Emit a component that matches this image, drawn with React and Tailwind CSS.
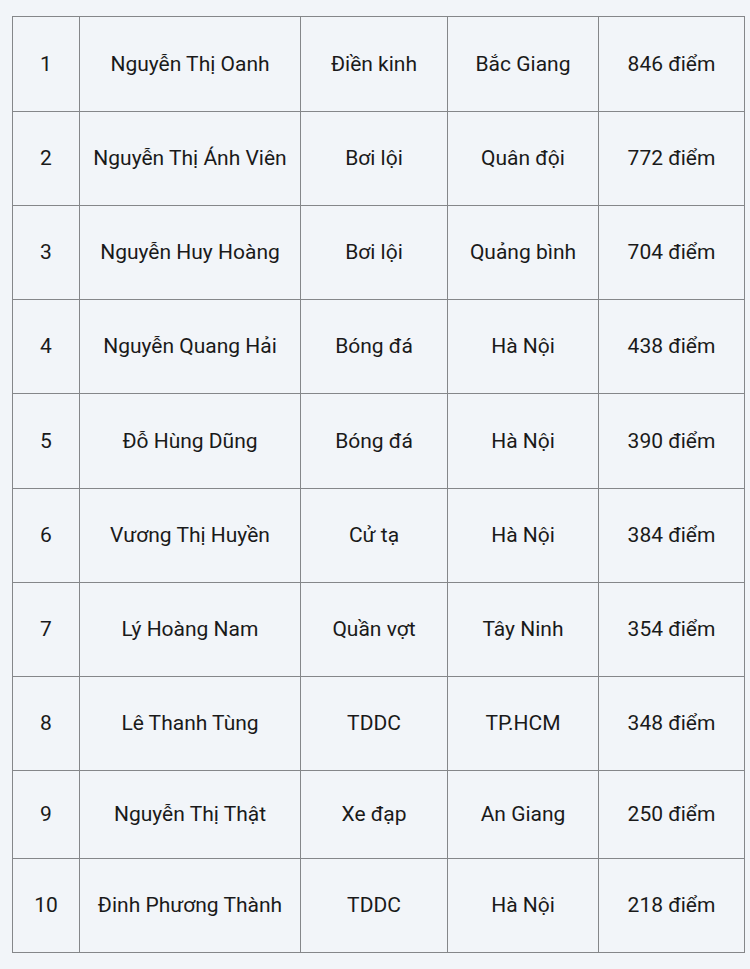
import React from 'react';

const rows = [
  ['1', 'Nguyễn Thị Oanh', 'Điền kinh', 'Bắc Giang', '846 điểm', 95],
  ['2', 'Nguyễn Thị Ánh Viên', 'Bơi lội', 'Quân đội', '772 điểm', 94],
  ['3', 'Nguyễn Huy Hoàng', 'Bơi lội', 'Quảng bình', '704 điểm', 94],
  ['4', 'Nguyễn Quang Hải', 'Bóng đá', 'Hà Nội', '438 điểm', 94],
  ['5', 'Đỗ Hùng Dũng', 'Bóng đá', 'Hà Nội', '390 điểm', 95],
  ['6', 'Vương Thị Huyền', 'Cử tạ', 'Hà Nội', '384 điểm', 94],
  ['7', 'Lý Hoàng Nam', 'Quần vợt', 'Tây Ninh', '354 điểm', 94],
  ['8', 'Lê Thanh Tùng', 'TDDC', 'TP.HCM', '348 điểm', 94],
  ['9', 'Nguyễn Thị Thật', 'Xe đạp', 'An Giang', '250 điểm', 88],
  ['10', 'Đinh Phương Thành', 'TDDC', 'Hà Nội', '218 điểm', 94],
];

const App = () => {
  return (
    <div className="min-h-[969px] w-[750px] bg-[#f2f5f9] pt-[16px] pl-[12px] font-['Roboto',sans-serif] text-[21px] text-[#1a1a1a]">
      <table className="table-fixed border-collapse w-[732px]">
        <colgroup>
          <col className="w-[67px]" />
          <col className="w-[221px]" />
          <col className="w-[147px]" />
          <col className="w-[151px]" />
          <col className="w-[146px]" />
        </colgroup>
        <tbody>
          {rows.map((row) => (
            <tr key={row[0]} style={{ height: row[5] }}>
              {row.slice(0, 5).map((cell, i) => (
                <td key={i} className="border border-[#85878a] text-center align-middle p-0 leading-none">
                  {cell}
                </td>
              ))}
            </tr>
          ))}
        </tbody>
      </table>
    </div>
  );
};

export default App;
